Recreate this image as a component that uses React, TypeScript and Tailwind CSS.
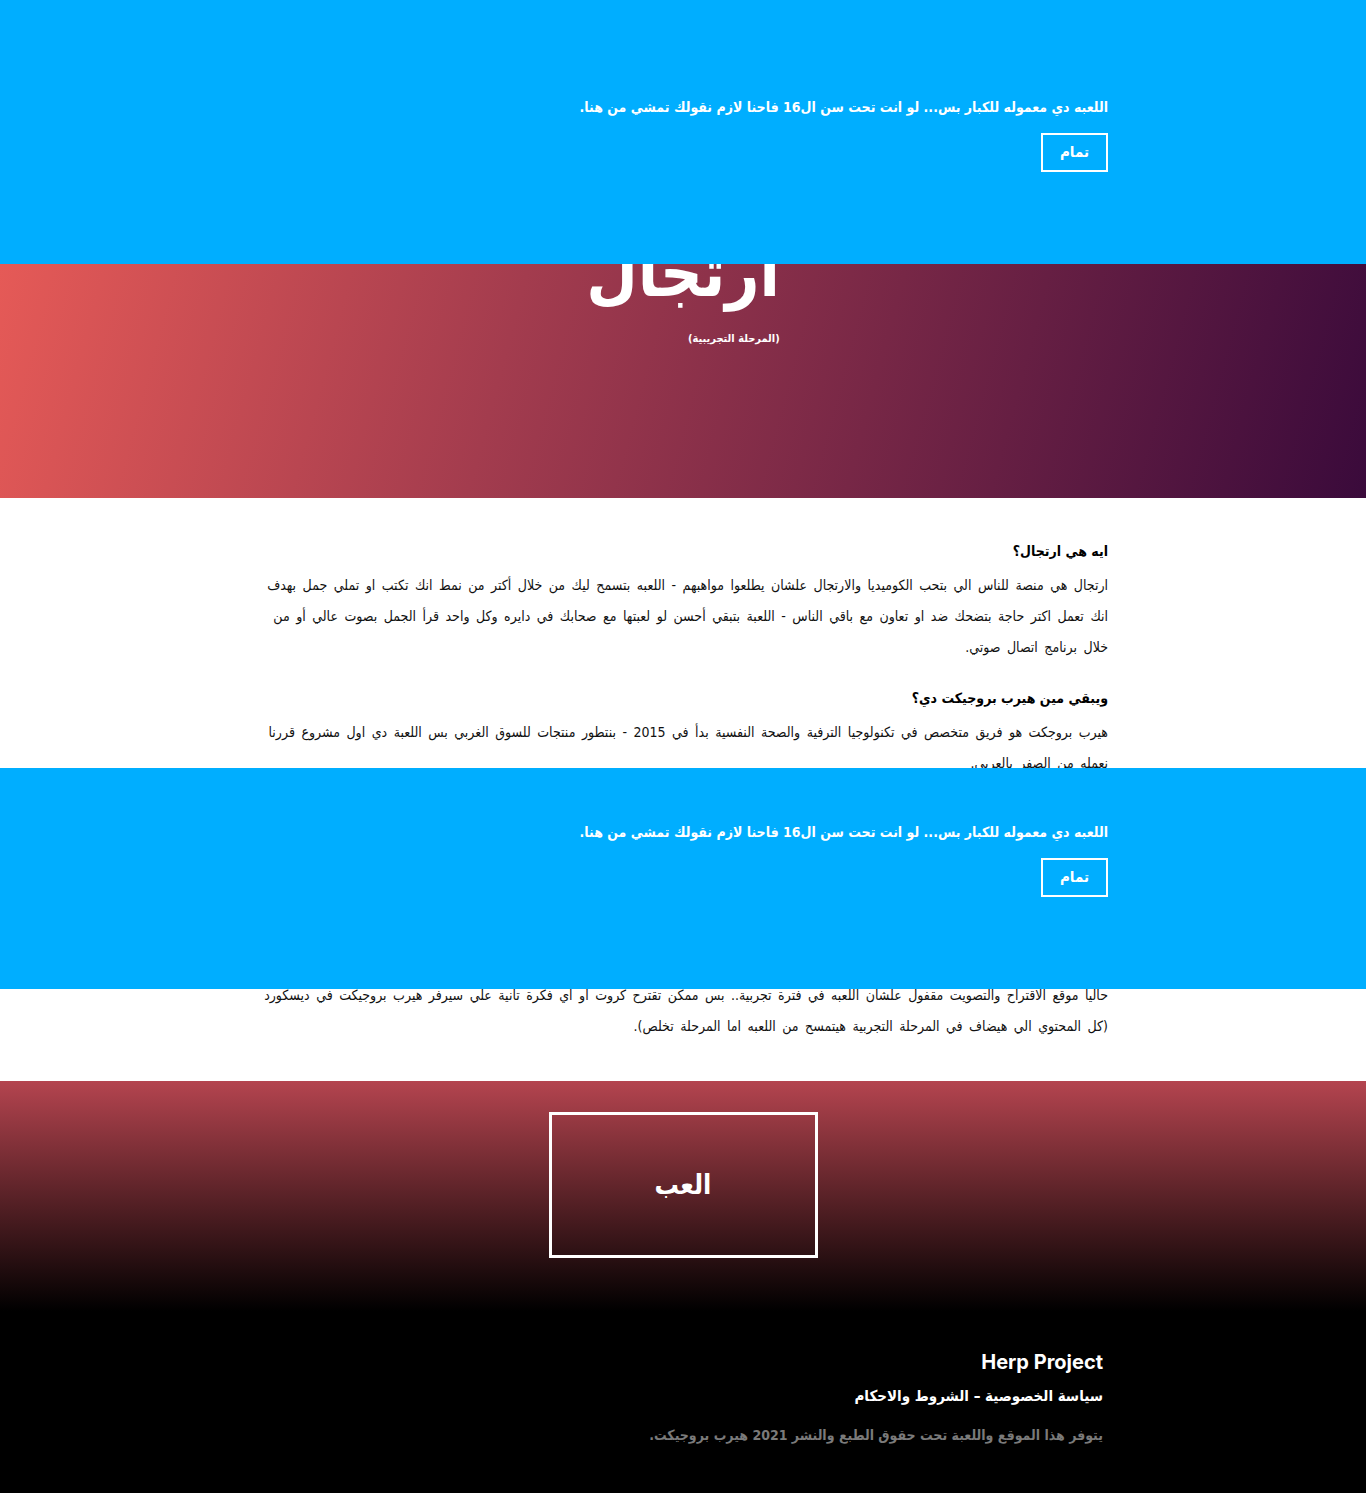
const arabic = "font-['DejaVu_Sans_Condensed','DejaVu_Sans',sans-serif]";

const sections = [
    {
        title: 'ايه هي ارتجال؟',
        lines: [
            'ارتجال هي منصة للناس الي بتحب الكوميديا والارتجال علشان يطلعوا مواهبهم - اللعبه بتسمح ليك من خلال أكتر من نمط انك تكتب او تملي جمل بهدف',
            'انك تعمل اكتر حاجة بتضحك ضد او تعاون مع باقي الناس - اللعبة بتبقي أحسن لو لعبتها مع صحابك في دايره وكل واحد قرأ الجمل بصوت عالي أو من',
            'خلال برنامج اتصال صوتي.',
        ],
    },
    {
        title: 'ويبقي مين هيرب بروجيكت دي؟',
        lines: [
            'هيرب بروجكت هو فريق متخصص في تكنولوجيا الترفية والصحة النفسية بدأ في 2015 - بنتطور منتجات للسوق الغربي بس اللعبة دي اول مشروع قررنا',
            'نعمله من الصفر بالعربي.',
        ],
    },
    {
        title: 'طب ازاي ألعب؟',
        lines: [
            'ادخل على زرار العب تحت واختار اسمك وابدأ أوضة جديدة أو ادخل أوضة صحابك بالكود - كل جولة هتكتب جملة وبعدين الناس كلها',
            'تصوت على أكتر جملة ضحكتهم.',
        ],
    },
    {
        title: 'عايز أضيف كروت جديدة؟',
        lines: [
            'اللعبة لسه في المرحلة التجريبية وبنضيف كروت جديدة كل فترة.',
            'حاليا موقع الاقتراح والتصويت مقفول علشان اللعبه في فترة تجربية.. بس ممكن تقترح كروت او اي فكرة تانية علي سيرفر هيرب بروجيكت في ديسكورد',
            '(كل المحتوي الي هيضاف في المرحلة التجربية هيتمسح من اللعبه اما المرحلة تخلص).',
        ],
    },
];

function AgeNotice({ className }: { className: string }) {
    return (
        <div className={`absolute inset-x-0 bg-[#00aeff] ${className}`}>
            <div className="mx-auto w-[850px] pb-[92px]">
                <p className="text-[14px] font-bold leading-[26px] text-white">
                    اللعبه دي معموله للكبار بس... لو انت تحت سن ال16 فاحنا لازم نقولك تمشي من هنا.
                </p>
                <button className="mt-[13px] h-[39px] w-[67px] border-2 border-white text-[15px] font-bold text-white">
                    تمام
                </button>
            </div>
        </div>
    );
}

export default function App() {
    return (
        <div dir="rtl" className={`relative w-full bg-white ${arabic}`}>
            <header className="flex h-[498px] justify-center bg-[linear-gradient(105deg,#ee5e58_0%,#a33c4e_40%,#3a0a3b_100%)] pt-[226px] text-white">
                <div className="flex flex-col items-start">
                    <h1 className="text-[66px] font-bold leading-[96px]">ارتجال</h1>
                    <p className="mt-[9px] text-[11px] font-bold">(المرحلة التجريبية)</p>
                </div>
            </header>

            <main className="mx-auto w-[850px] pt-[40px] pb-[39px]">
                {sections.map((s) => (
                    <section key={s.title} className="mb-[22px] last:mb-0">
                        <h2 className="text-[14px] font-bold leading-[26px] text-black">{s.title}</h2>
                        <div className="mt-[6px] text-[14px] leading-[31px] whitespace-nowrap text-[#111] [word-spacing:2.5px]">
                            {s.lines.map((l) => (
                                <p key={l}>{l}</p>
                            ))}
                        </div>
                    </section>
                ))}
            </main>

            <div className="flex h-[230px] items-start justify-center bg-[linear-gradient(180deg,#b4444f_0%,#000000_100%)] pt-[31px]">
                <button className="flex h-[146px] w-[269px] items-center justify-center border-[3px] border-white text-[27px] font-bold text-white">
                    العب
                </button>
            </div>

            <footer className="bg-black pt-[36px] pb-[50px]">
                <div className="mx-auto w-[840px] text-white">
                    <p className="font-['Inter',sans-serif] text-[20px] font-bold">Herp Project</p>
                    <p className="mt-[8px] text-[15px] font-bold">سياسة الخصوصية – الشروط والاحكام</p>
                    <p className="mt-[17px] text-[14px] font-bold text-[#7a7a7a]">
                        يتوفر هذا الموقع واللعبة تحت حقوق الطبع والنشر 2021 هيرب بروجيكت.
                    </p>
                </div>
            </footer>

            <AgeNotice className="top-0 pt-[94px]" />
            <AgeNotice className="top-[768px] pt-[51px]" />
        </div>
    );
}
